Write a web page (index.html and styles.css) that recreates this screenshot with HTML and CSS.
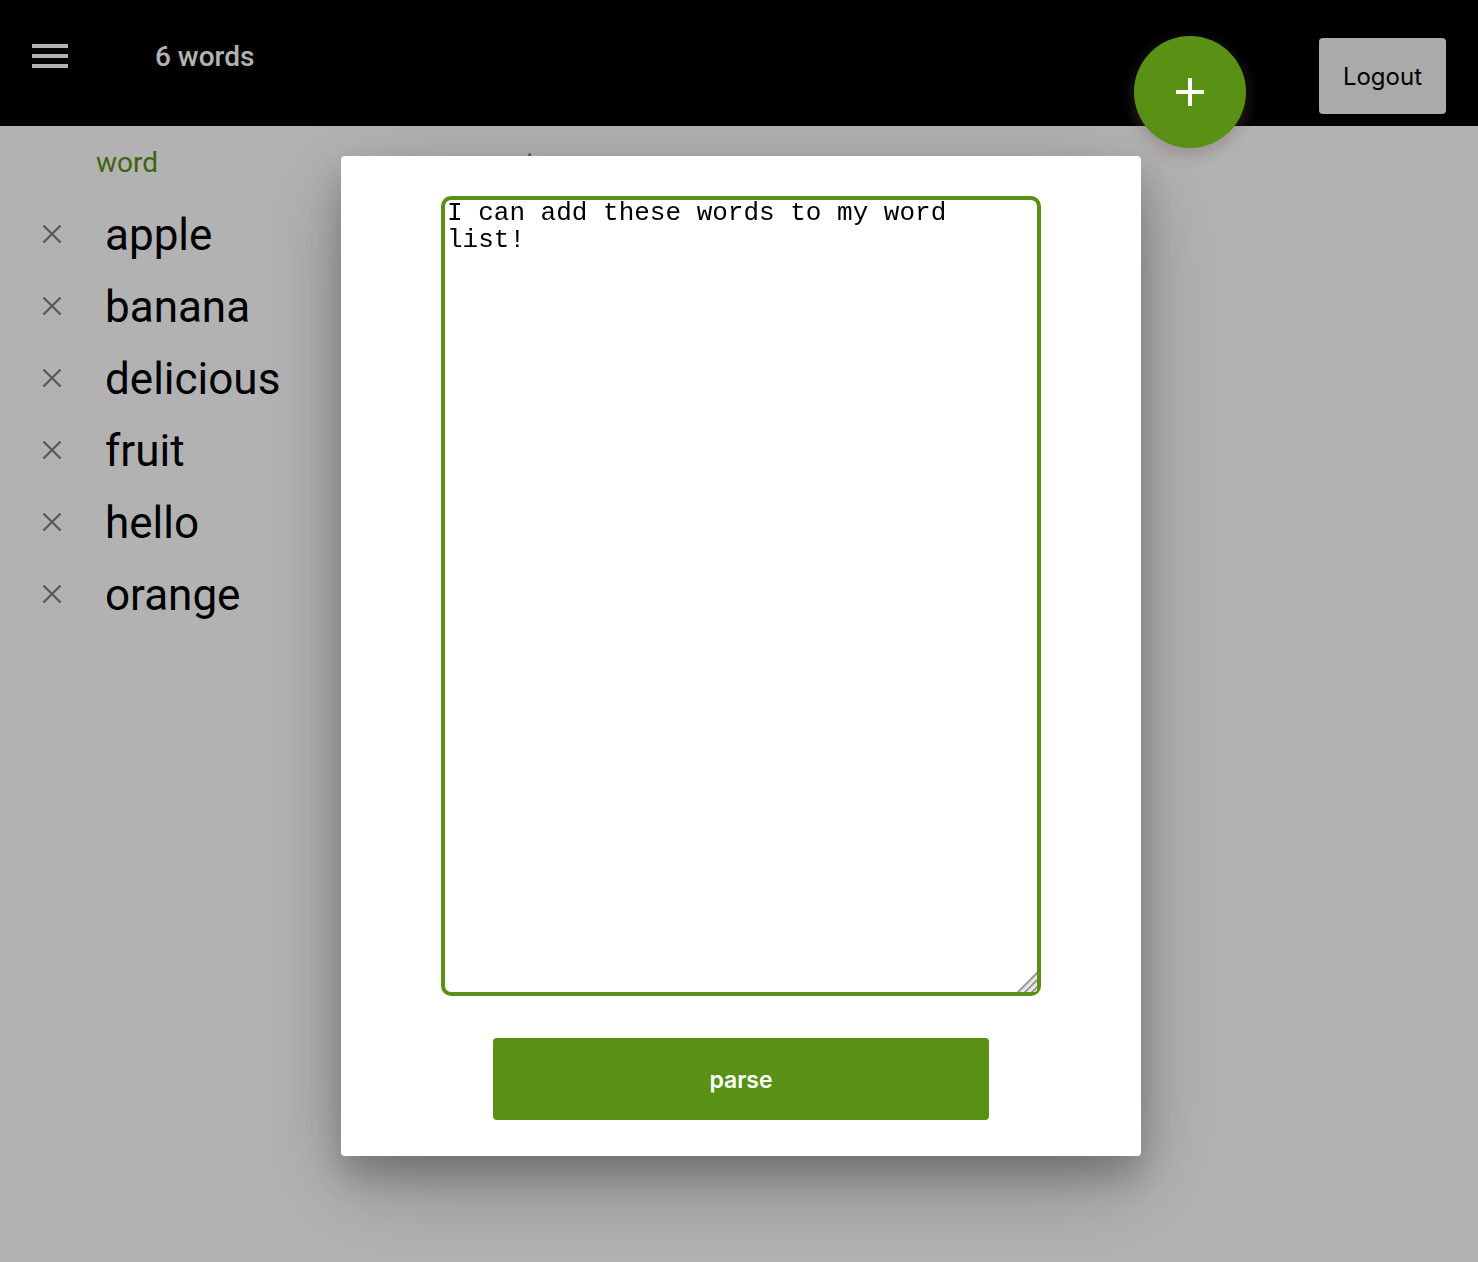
FILE: index.html
```html
<!DOCTYPE html>
<html lang="en">
<head>
<meta charset="utf-8">
<meta name="viewport" content="width=device-width, initial-scale=1">
<title>Word list</title>
<link rel="stylesheet" href="styles.css">
</head>
<body>
<header class="toolbar">
  <button class="menu-button" type="button" aria-label="Menu">
    <svg width="36" height="24" viewBox="0 0 36 24" fill="currentColor" aria-hidden="true"><path d="M0 0h36v4H0zM0 10h36v4H0zM0 20h36v4H0z"/></svg>
  </button>
  <h1 class="title">6 words</h1>
  <button class="logout" type="button">Logout</button>
</header>

<main>
  <table class="words">
    <thead>
      <tr><td class="action"></td><th scope="col" class="word">word</th><th scope="col">count</th></tr>
    </thead>
    <tbody>
      <tr><td><button class="remove" type="button" aria-label="Remove apple"><svg width="20" height="20" viewBox="0 0 20 20" aria-hidden="true"><path d="M1.5 1.5l17 17M18.5 1.5l-17 17"/></svg></button></td><td class="entry">apple</td><td></td></tr>
      <tr><td><button class="remove" type="button" aria-label="Remove banana"><svg width="20" height="20" viewBox="0 0 20 20" aria-hidden="true"><path d="M1.5 1.5l17 17M18.5 1.5l-17 17"/></svg></button></td><td class="entry">banana</td><td></td></tr>
      <tr><td><button class="remove" type="button" aria-label="Remove delicious"><svg width="20" height="20" viewBox="0 0 20 20" aria-hidden="true"><path d="M1.5 1.5l17 17M18.5 1.5l-17 17"/></svg></button></td><td class="entry">delicious</td><td></td></tr>
      <tr><td><button class="remove" type="button" aria-label="Remove fruit"><svg width="20" height="20" viewBox="0 0 20 20" aria-hidden="true"><path d="M1.5 1.5l17 17M18.5 1.5l-17 17"/></svg></button></td><td class="entry">fruit</td><td></td></tr>
      <tr><td><button class="remove" type="button" aria-label="Remove hello"><svg width="20" height="20" viewBox="0 0 20 20" aria-hidden="true"><path d="M1.5 1.5l17 17M18.5 1.5l-17 17"/></svg></button></td><td class="entry">hello</td><td></td></tr>
      <tr><td><button class="remove" type="button" aria-label="Remove orange"><svg width="20" height="20" viewBox="0 0 20 20" aria-hidden="true"><path d="M1.5 1.5l17 17M18.5 1.5l-17 17"/></svg></button></td><td class="entry">orange</td><td></td></tr>
    </tbody>
  </table>
</main>

<div class="scrim"></div>

<button class="fab" type="button" aria-label="Add words">
  <svg width="28" height="28" viewBox="0 0 28 28" fill="currentColor" aria-hidden="true"><path d="M12 0h4v12h12v4H16v12h-4V16H0v-4h12z"/></svg>
</button>

<div class="dialog-layer">
  <form class="dialog" role="dialog" aria-label="Add words">
    <div class="field">
      <textarea class="input" aria-label="Text to parse" spellcheck="false">I can add these words to my word list!</textarea>
      <svg class="grip" width="22" height="22" viewBox="0 0 22 22" aria-hidden="true"><path class="grip-light" d="M5 23L23 5M12 23l11-11M18 23l5-5"/><path class="grip-dark" d="M2 23L23 2M9 23L23 9M16 23l7-7"/></svg>
    </div>
    <button class="parse" type="button">parse</button>
  </form>
</div>
</body>
</html>
```
FILE: styles.css
```css
* {
  box-sizing: border-box;
}

body {
  margin: 0;
  min-height: 100vh;
  background: #fff;
  color: #000;
  font-family: Roboto, "Liberation Sans", sans-serif;
}

button {
  border: 0;
  padding: 0;
  background: none;
  color: inherit;
  cursor: pointer;
}

svg {
  display: block;
}

.toolbar {
  display: flex;
  align-items: flex-start;
  padding: 38px 32px 12px;
  background: #000;
  color: #fff;
}

.menu-button {
  display: flex;
  align-items: center;
  height: 36px;
}

.title {
  flex: 1;
  margin: 0;
  padding-left: 87px;
  font-size: 28px;
  font-weight: 500;
  line-height: 38px;
}

.logout {
  padding: 2px 24px 0;
  border-radius: 4px;
  background: #f4f4f4;
  color: #000;
  font: 400 24px/74px Inter, sans-serif;
}

.words {
  border-collapse: collapse;
}

.words th,
.words td {
  height: 72px;
  padding: 0;
  text-align: left;
}

.words th {
  color: #599115;
  font-size: 28px;
  font-weight: 400;
}

.words .action {
  width: 96px;
}

.words .word {
  width: 368px;
}

.words .entry {
  padding: 2px 0 0 9px;
  font-size: 44px;
}

.remove {
  display: block;
  padding-left: 42px;
}

.remove path {
  fill: none;
  stroke: #808080;
  stroke-width: 2.4;
}

.scrim {
  position: fixed;
  inset: 0;
  background: rgba(0, 0, 0, 0.3);
}

.fab {
  position: fixed;
  top: 36px;
  right: 232px;
  display: grid;
  place-items: center;
  width: 112px;
  height: 112px;
  border-radius: 50%;
  background: #599115;
  color: #fff;
  box-shadow: 0 6px 16px rgba(120, 90, 90, 0.4);
}

.dialog-layer {
  position: fixed;
  inset: 0;
  display: flex;
  justify-content: center;
  align-items: flex-start;
  padding: 156px 0 0 4px;
}

.dialog {
  display: flex;
  flex-direction: column;
  align-items: center;
  gap: 42px;
  width: 800px;
  max-width: 100%;
  padding: 40px 100px 36px;
  border-radius: 4px;
  background: #fff;
  box-shadow:
    0 28px 90px rgba(0, 0, 0, 0.25),
    0 20px 36px rgba(0, 0, 0, 0.22);
}

.field {
  position: relative;
  width: 100%;
}

.input {
  display: block;
  width: 100%;
  height: 800px;
  padding: 0 2px;
  border: 4px solid #599115;
  border-radius: 10px;
  outline: 0;
  resize: none;
  background: #fff;
  color: #000;
  font: 400 26px/27px Courier, "Liberation Mono", monospace;
}

.grip {
  position: absolute;
  right: 4px;
  bottom: 4px;
  fill: none;
  stroke-width: 2;
}

.grip-dark {
  stroke: #999;
}

.grip-light {
  stroke: #e4e4e4;
}

.parse {
  width: 496px;
  max-width: 100%;
  padding-top: 2px;
  border-radius: 4px;
  background: #599115;
  color: #fff;
  font: 600 23px/80px Inter, sans-serif;
}
```
